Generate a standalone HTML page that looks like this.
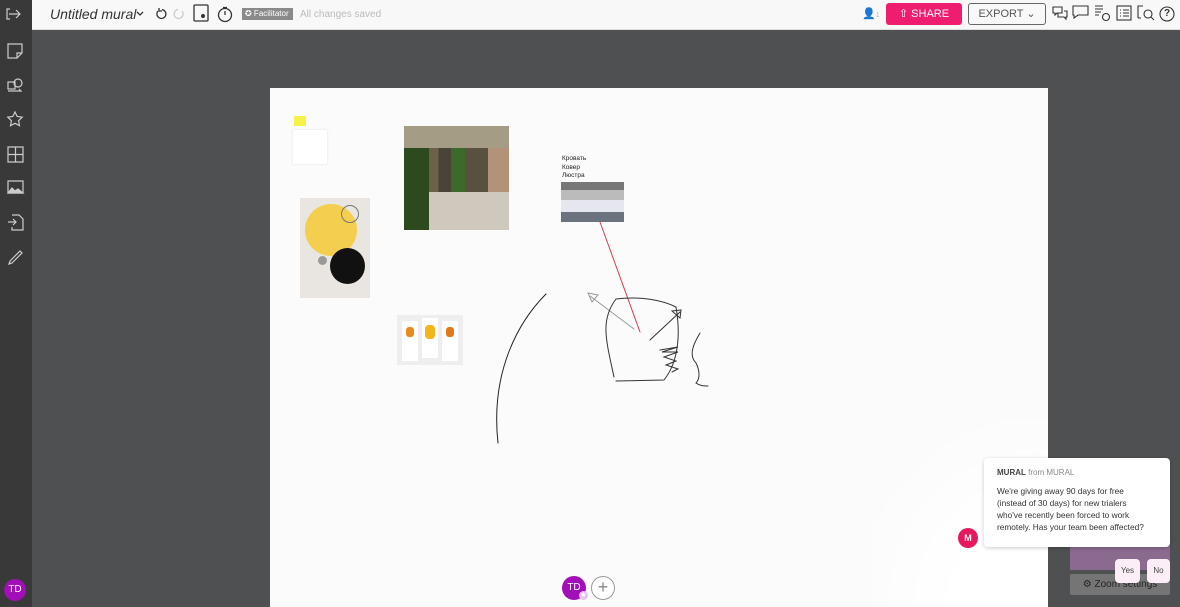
<!DOCTYPE html>
<html><head><meta charset="utf-8"><style>
*{margin:0;padding:0;box-sizing:border-box}
body{width:1180px;height:607px;overflow:hidden;position:relative;background:#4f5052;font-family:"Liberation Sans",sans-serif}
.top{position:absolute;left:0;top:0;width:1180px;height:30px;background:#f8f8f8;border-bottom:1px solid #ddd}
.side{position:absolute;left:0;top:0;width:32px;height:607px;background:#393939}
.ab{position:absolute}
svg{position:absolute;overflow:visible}
.board{position:absolute;left:270px;top:88px;width:778px;height:519px;background:#fbfbfb}
</style></head><body>
<div class="board"></div>
<div class="ab" style="left:870px;top:420px;width:178px;height:187px;background:radial-gradient(circle at 100% 100%,#fff 35%,rgba(255,255,255,0) 80%)"></div>
<div class="top"></div>
<div class="side"></div>
<svg width="32" height="607" style="left:0;top:0" fill="none" stroke="#ccc" stroke-width="1.2">
<path d="M10 9h-3v10h3M9 14h11M16 10l4 4-4 4"/>
<path d="M8 44h14v9l-5 5h-9z M17 58v-5h5"/>
<rect x="8" y="82" width="7" height="7"/><circle cx="18" cy="83" r="4"/><path d="M8 91h13l-2 -2"/>
<path d="M15 112l2.2 4.5 5 .7-3.6 3.5.9 5-4.5-2.4-4.5 2.4.9-5-3.6-3.5 5-.7z"/>
<path d="M8 147h15v15H8zM15.5 147v15M8 154.5h15"/>
<path d="M8 181h15v12H8z"/><path d="M8 193l4-5 3 3 3-2 5 4z" fill="#ccc"/>
<path d="M12 215h7l4 4v11H12v-3M8 222h8M13 219l3 3-3 3"/>
<path d="M10 261l10-10 2 2-10 10-3 1z"/>
</svg>
<div class="ab" style="left:4px;top:579px;width:22px;height:22px;border-radius:50%;background:#a20fb8;color:#fff;font-size:10px;line-height:22px;text-align:center">TD</div>
<div class="ab" style="left:50px;top:6px;font-size:14px;font-style:italic;color:#333">Untitled mural</div>
<svg width="400" height="30" style="left:0;top:0" fill="none" stroke="#333" stroke-width="1.3">
<path d="M137 12l3 3 3-3"/>
<path d="M158 11a4.5 4.5 0 1 0 4 -1.5M159 8v3h3"/>
<path d="M182 11a4.5 4.5 0 1 1 -4 -1.5" stroke="#ccc"/>
<rect x="194" y="5" width="14" height="16" rx="1"/><circle cx="203" cy="16" r="1.3" fill="#333"/>
<circle cx="225" cy="15" r="6.5"/><path d="M225 11v4M223 7.5h4"/>
</svg>
<div class="ab" style="left:242px;top:8px;width:51px;height:12px;background:#8a8a8a;color:#fff;font-size:8px;line-height:12px;padding-left:3px">✪ Facilitator</div>
<div class="ab" style="left:300px;top:9px;font-size:10px;color:#bbb">All changes saved</div>
<div class="ab" style="left:862px;top:7px;font-size:11px;color:#bbb">👤<span style="font-size:7px">1</span></div>
<div class="ab" style="left:886px;top:3px;width:76px;height:22px;background:#ef1d6d;border-radius:3px;color:#fff;font-size:11px;line-height:22px;text-align:center">⇧ SHARE</div>
<div class="ab" style="left:968px;top:3px;width:78px;height:22px;border:1px solid #666;border-radius:3px;color:#555;font-size:11px;line-height:20px;text-align:center">EXPORT ⌄</div>
<svg width="1180" height="30" style="left:0;top:0" fill="none" stroke="#333" stroke-width="1.1">
<path d="M1053 7h9v6h-5l-2 2v-2h-2z M1058 13v4h6l2 2v-2h1v-6h-3"/>
<path d="M1073 6h15v9h-10l-4 3v-3h-1z"/>
<path d="M1095 6h8M1095 9h8M1095 12h6M1095 15h4"/><circle cx="1106" cy="17" r="3.5"/>
<rect x="1117" y="6" width="14" height="14"/><path d="M1120 10h1M1123 10h6M1120 13h1M1123 13h6M1120 16h1M1123 16h6"/>
<path d="M1143 6h-5v12M1138 18h3"/><circle cx="1148" cy="14" r="4"/><path d="M1151 17l3 3"/>
<circle cx="1167" cy="14" r="7"/>
</svg>
<div class="ab" style="left:1164px;top:8px;font-size:10px;font-weight:bold;color:#333">?</div>
<div class="ab" style="left:294px;top:116px;width:12px;height:10px;background:#f6f24a"></div>
<div class="ab" style="left:293px;top:130px;width:34px;height:34px;background:#fff;box-shadow:0 0 2px #ddd"></div>
<div class="ab" style="left:300px;top:198px;width:70px;height:100px;background:#e9e6e1"></div>
<div class="ab" style="left:305px;top:204px;width:52px;height:52px;border-radius:50%;background:#f4cf4f"></div>
<div class="ab" style="left:330px;top:248px;width:35px;height:36px;border-radius:50%;background:#111"></div>
<div class="ab" style="left:318px;top:256px;width:9px;height:9px;border-radius:50%;background:#999"></div>
<div class="ab" style="left:341px;top:205px;width:18px;height:18px;border-radius:50%;border:1px solid #777"></div>
<div class="ab" style="left:404px;top:126px;width:105px;height:104px;background:linear-gradient(90deg,#2d4a1e 0 24%,#6b6048 24% 33%,#4a4438 33% 45%,#3b6a2a 45% 58%,#5a5040 58% 80%,#b29278 80%)"></div>
<div class="ab" style="left:404px;top:126px;width:105px;height:22px;background:#a49c84"></div>
<div class="ab" style="left:404px;top:192px;width:105px;height:38px;background:linear-gradient(90deg,#2d4a1e 0 24%,#cfc9bd 24%)"></div>
<div class="ab" style="left:562px;top:155px;font-size:6.5px;line-height:8.5px;color:#222;font-family:'Liberation Sans','DejaVu Sans',sans-serif">Кровать<br>Ковер<br>Люстра</div>
<div class="ab" style="left:561px;top:182px;width:63px;height:40px;background:linear-gradient(180deg,#777 0 20%,#bbb 20% 45%,#e6e6ee 45% 75%,#6b7280 75%)"></div>
<div class="ab" style="left:397px;top:315px;width:66px;height:50px;background:#eee"></div>
<div class="ab" style="left:402px;top:321px;width:16px;height:40px;background:#fff"></div>
<div class="ab" style="left:422px;top:318px;width:16px;height:40px;background:#fff"></div>
<div class="ab" style="left:442px;top:321px;width:16px;height:40px;background:#fff"></div>
<div class="ab" style="left:406px;top:327px;width:8px;height:10px;background:#e88a1f;border-radius:3px"></div>
<div class="ab" style="left:425px;top:325px;width:10px;height:14px;background:#f2b51d;border-radius:4px"></div>
<div class="ab" style="left:446px;top:327px;width:8px;height:10px;background:#e07a1c;border-radius:3px"></div>
<svg width="1180" height="607" style="left:0;top:0" fill="none" stroke-linecap="round">
<path d="M546 294C520 320 490 370 498 443" stroke="#222" stroke-width="1"/>
<path d="M600 222L640 332" stroke="#d04050" stroke-width="1"/>
<path d="M634 329L590 296M588 293l10 2-6 7z" stroke="#999" stroke-width="1"/>
<path d="M614 377C606 340 600 320 616 299C640 296 662 300 676 307C680 330 680 360 664 380L616 381" stroke="#333" stroke-width="1"/>
<path d="M650 340L680 312M672 311l9 -1-1 8z" stroke="#333" stroke-width="1"/>
<path d="M660 350l18 -3-16 5 16 0-14 5 12 4-10 4 12 4-6 3M700 333c-6 10-12 22-4 30 4 8 4 16 0 20 4 3 8 3 12 3" stroke="#333" stroke-width="1"/>
</svg>
<div class="ab" style="left:562px;top:576px;width:24px;height:24px;border-radius:50%;background:#a20fb8;color:#fff;font-size:10px;line-height:24px;text-align:center">TD</div>
<div class="ab" style="left:579px;top:591px;width:9px;height:9px;border-radius:50%;background:#e9c4f0;font-size:7px;line-height:9px;text-align:center;color:#fff">★</div>
<div class="ab" style="left:591px;top:576px;width:24px;height:24px;border-radius:50%;border:1px solid #999;background:#fff;color:#888;font-size:18px;line-height:21px;text-align:center">+</div>
<div class="ab" style="left:1070px;top:545px;width:100px;height:25px;background:#8a6a8e"></div>
<div class="ab" style="left:1070px;top:574px;width:100px;height:21px;background:#757575;border-radius:2px;color:#222;font-size:10px;line-height:21px;text-align:center">⚙ Zoom settings</div>
<div class="ab" style="left:984px;top:458px;width:186px;height:89px;background:#fff;border-radius:4px;box-shadow:0 1px 4px rgba(0,0,0,.2);padding:9px 13px;font-size:8.3px;color:#333;line-height:12px;white-space:nowrap">
<div style="margin-bottom:6px;font-size:8px"><b style="color:#444">MURAL</b> <span style="color:#888">from MURAL</span></div>
We're giving away 90 days for free<br>(instead of 30 days) for new trialers<br>who've recently been forced to work<br>remotely. Has your team been affected?</div>
<div class="ab" style="left:958px;top:528px;width:20px;height:20px;border-radius:50%;background:#e8185f;color:#fff;font-size:9px;font-weight:bold;line-height:20px;text-align:center">M</div>
<div class="ab" style="left:1115px;top:559px;width:25px;height:24px;background:#fbeef6;border-radius:4px;color:#444;font-size:8px;line-height:24px;text-align:center">Yes</div>
<div class="ab" style="left:1147px;top:559px;width:23px;height:24px;background:#fbeef6;border-radius:4px;color:#444;font-size:8px;line-height:24px;text-align:center">No</div>
</body></html>
